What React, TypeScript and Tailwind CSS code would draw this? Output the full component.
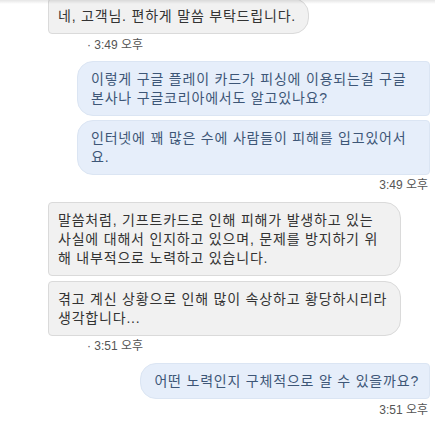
import React from 'react';

const font = { fontFamily: '"Liberation Sans", "Noto Sans CJK KR", sans-serif' };

const AgentBubble: React.FC<{ lines: string[]; full?: boolean; className?: string }> = ({ lines, full, className = '' }) => (
  <div
    className={`ml-[48px] ${full ? 'w-[353px]' : 'w-fit'} rounded-l-[4px] rounded-r-[16px] border border-[#dadada] bg-[#f1f1f1] pl-[9px] pr-[12px] py-[7.5px] text-[14px] leading-[19px] tracking-[0.8px] text-[#333333] whitespace-nowrap ${className}`}
  >
    {lines.map((l, i) => (
      <div key={i}>{l}</div>
    ))}
  </div>
);

const UserBubble: React.FC<{ lines: string[]; full?: boolean; className?: string }> = ({ lines, full, className = '' }) => (
  <div
    className={`self-end mr-[5px] ${full ? 'w-[353px]' : 'w-fit'} rounded-l-[16px] rounded-r-[4px] border border-[#dbe5f3] bg-[#e6eefa] pl-[13px] pr-[10px] py-[7.5px] text-[14px] leading-[19px] tracking-[0.8px] text-[#3d5677] whitespace-nowrap ${className}`}
  >
    {lines.map((l, i) => (
      <div key={i}>{l}</div>
    ))}
  </div>
);

const AgentTime: React.FC<{ time: string; className?: string }> = ({ time, className = '' }) => (
  <div className={`ml-[87px] text-[12px] leading-[14px] text-[#555555] ${className}`}>· {time}</div>
);

const UserTime: React.FC<{ time: string; className?: string }> = ({ time, className = '' }) => (
  <div className={`self-end mr-[7px] text-[12px] leading-[14px] text-[#555555] ${className}`}>{time}</div>
);

export default function App() {
  return (
    <div className="relative h-[423px] w-[435px] overflow-hidden bg-white" style={font}>
      <div className="pointer-events-none absolute inset-x-0 top-0 z-10 h-[4px] bg-gradient-to-b from-black/10 to-transparent" />
      <div className="-mt-[2px] flex flex-col">
        <AgentBubble lines={['네, 고객님. 편하게 말씀 부탁드립니다.']} />
        <AgentTime time="3:49 오후" className="mt-[4px]" />

        <UserBubble
          full
          className="mt-[9px]"
          lines={['이렇게 구글 플레이 카드가 피싱에 이용되는걸 구글', '본사나 구글코리아에서도 알고있나요?']}
        />
        <UserBubble
          full
          className="mt-[4px]"
          lines={['인터넷에 꽤 많은 수에 사람들이 피해를 입고있어서', '요.']}
        />
        <UserTime time="3:49 오후" className="mt-[3px]" />

        <AgentBubble
          full
          className="mt-[10px]"
          lines={[
            '말씀처럼, 기프트카드로 인해 피해가 발생하고 있는',
            '사실에 대해서 인지하고 있으며, 문제를 방지하기 위',
            '해 내부적으로 노력하고 있습니다.',
          ]}
        />
        <AgentBubble
          full
          className="mt-[5px]"
          lines={['겪고 계신 상황으로 인해 많이 속상하고 황당하시리라', '생각합니다...']}
        />
        <AgentTime time="3:51 오후" className="mt-[3px]" />

        <UserBubble className="mt-[10px]" lines={['어떤 노력인지 구체적으로 알 수 있을까요?']} />
        <UserTime time="3:51 오후" className="mt-[4px]" />

        <div className="mt-[7px] ml-[48px] h-[40px] w-[353px] rounded-l-[4px] rounded-r-[16px] border border-[#dadada] bg-[#f1f1f1]" />
      </div>
    </div>
  );
}
